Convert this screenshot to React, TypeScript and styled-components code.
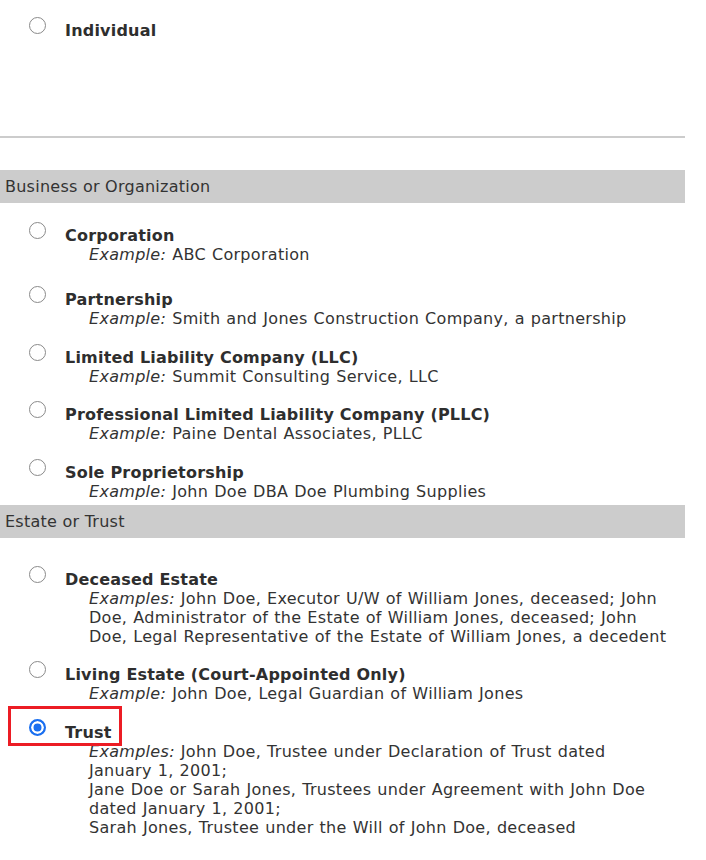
import React from "react";
import styled, { createGlobalStyle } from "styled-components";

const GlobalStyle = createGlobalStyle`
  html, body {
    margin: 0;
    padding: 0;
    background: #ffffff;
  }
  body {
    font-family: "DejaVu Sans", Verdana, sans-serif;
    font-size: 16px;
    color: #333333;
  }
`;

const Page = styled.div`
  width: 685px;
`;

const IndividualBlock = styled.div`
  height: 115px;
  padding-top: 21px;
  border-left: 1px solid #f3f3f3;
  margin-left: -1px;
`;

const Rule = styled.div`
  height: 2px;
  background: #cccccc;
  margin-bottom: 32px;
`;

const SectionBar = styled.div<{ $gap?: number }>`
  height: 33px;
  line-height: 33px;
  margin-top: ${(p) => p.$gap ?? 0}px;
  padding-left: 5px;
  background: #cccccc;
  color: #333333;
  font-size: 16px;
  letter-spacing: 0.25px;
`;

const OptionList = styled.div`
  display: flex;
  flex-direction: column;
`;

const Option = styled.div<{ $gap: number }>`
  margin-top: ${(p) => p.$gap}px;
  padding-left: 29px;
  line-height: 19px;
`;

const Head = styled.label<{ $highlight?: boolean }>`
  position: relative;
  display: flex;
  align-items: flex-start;
  &::after {
    content: "";
    display: ${(p) => (p.$highlight ? "block" : "none")};
    position: absolute;
    left: -21px;
    top: -17px;
    width: 114px;
    height: 40px;
    box-sizing: border-box;
    border: 3px solid #ec1c24;
    pointer-events: none;
  }
`;

const Radio = styled.input.attrs({ type: "radio" })`
  appearance: none;
  -webkit-appearance: none;
  flex: none;
  width: 17px;
  height: 17px;
  margin: -4px 19px 0 0;
  box-sizing: border-box;
  border-radius: 50%;
  border: 1px solid #8a8a8a;
  background: #ffffff;
  &:checked {
    border: 2px solid #1a6ff0;
    background: #1a6ff0;
    box-shadow: inset 0 0 0 2.5px #ffffff;
  }
`;

const Title = styled.span`
  font-weight: bold;
  color: #2e2e2e;
  letter-spacing: 0.2px;
`;

const Examples = styled.div`
  padding-left: 60px;
  color: #333333;
  letter-spacing: 0.3px;
  word-spacing: 0.6px;
`;

const Line = styled.div`
  white-space: nowrap;
`;

const Lead = styled.em`
  font-style: italic;
`;

type Item = {
  title: string;
  lead?: string;
  lines?: string[];
  gap: number;
  checked?: boolean;
};

const business: Item[] = [
  { title: "Corporation", lead: "Example:", lines: ["ABC Corporation"], gap: 23 },
  {
    title: "Partnership",
    lead: "Example:",
    lines: ["Smith and Jones Construction Company, a partnership"],
    gap: 26,
  },
  {
    title: "Limited Liability Company (LLC)",
    lead: "Example:",
    lines: ["Summit Consulting Service, LLC"],
    gap: 20,
  },
  {
    title: "Professional Limited Liability Company (PLLC)",
    lead: "Example:",
    lines: ["Paine Dental Associates, PLLC"],
    gap: 19,
  },
  {
    title: "Sole Proprietorship",
    lead: "Example:",
    lines: ["John Doe DBA Doe Plumbing Supplies"],
    gap: 20,
  },
];

const estate: Item[] = [
  {
    title: "Deceased Estate",
    lead: "Examples:",
    lines: [
      "John Doe, Executor U/W of William Jones, deceased; John",
      "Doe, Administrator of the Estate of William Jones, deceased; John",
      "Doe, Legal Representative of the Estate of William Jones, a decedent",
    ],
    gap: 32,
  },
  {
    title: "Living Estate (Court-Appointed Only)",
    lead: "Example:",
    lines: ["John Doe, Legal Guardian of William Jones"],
    gap: 19,
  },
  {
    title: "Trust",
    lead: "Examples:",
    lines: [
      "John Doe, Trustee under Declaration of Trust dated",
      "January 1, 2001;",
      "Jane Doe or Sarah Jones, Trustees under Agreement with John Doe",
      "dated January 1, 2001;",
      "Sarah Jones, Trustee under the Will of John Doe, deceased",
    ],
    gap: 20,
    checked: true,
  },
];

const OptionView: React.FC<{ item: Item }> = ({ item }) => (
  <Option $gap={item.gap}>
    <Head $highlight={item.checked}>
      <Radio name="entity" defaultChecked={item.checked} />
      <Title>{item.title}</Title>
    </Head>
    {item.lines && (
      <Examples>
        {item.lines.map((l, i) => (
          <Line key={i}>
            {i === 0 && item.lead ? (
              <>
                <Lead>{item.lead}</Lead> {l}
              </>
            ) : (
              l
            )}
          </Line>
        ))}
      </Examples>
    )}
  </Option>
);

export default function App() {
  return (
    <>
      <GlobalStyle />
      <Page>
        <IndividualBlock>
          <Option $gap={0}>
            <Head>
              <Radio name="entity" />
              <Title>Individual</Title>
            </Head>
          </Option>
        </IndividualBlock>
        <Rule />
        <SectionBar>Business or Organization</SectionBar>
        <OptionList>
          {business.map((it) => (
            <OptionView key={it.title} item={it} />
          ))}
        </OptionList>
        <SectionBar $gap={4}>Estate or Trust</SectionBar>
        <OptionList>
          {estate.map((it) => (
            <OptionView key={it.title} item={it} />
          ))}
        </OptionList>
      </Page>
    </>
  );
}
